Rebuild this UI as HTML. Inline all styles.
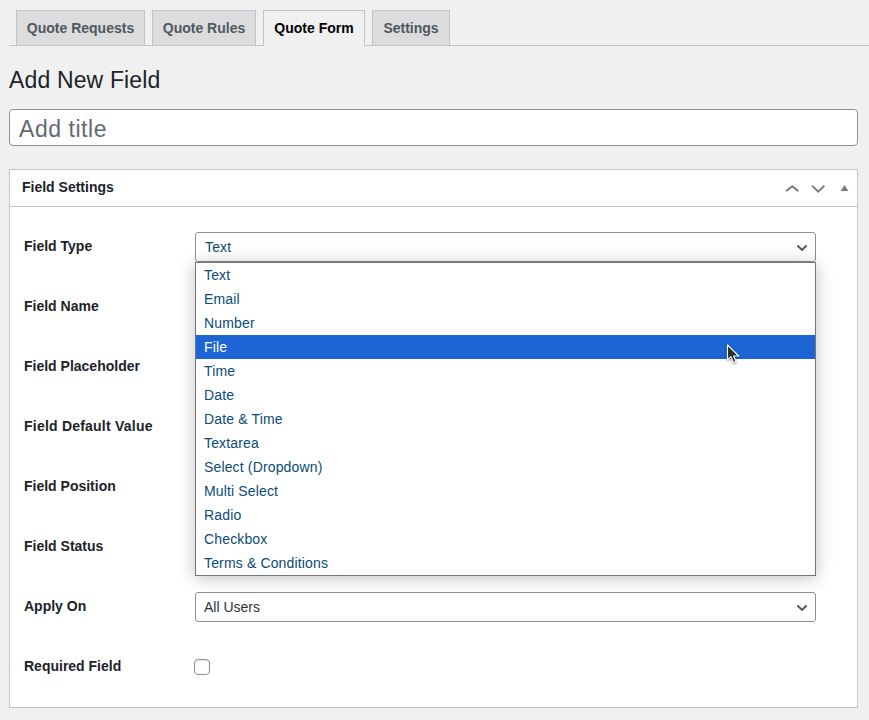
<!DOCTYPE html>
<html><head><meta charset="utf-8">
<style>
html,body{margin:0;padding:0;}
body{width:869px;height:720px;overflow:hidden;background:#f0f0f1;position:relative;font-family:"Liberation Sans",sans-serif;color:#1d2327;}
.a{position:absolute;white-space:nowrap;line-height:1;}
.tabline{position:absolute;left:9px;top:45px;width:860px;height:1px;background:#c3c4c7;}
.tab{position:absolute;top:10px;height:35px;box-sizing:border-box;border:1px solid #c3c4c7;border-bottom:none;background:#dcdcde;color:#50575e;font-weight:bold;font-size:14px;}
.tab.act{background:#f0f0f1;color:#000;height:36px;}
.tab span{position:absolute;top:10px;left:0;right:0;text-align:center;line-height:1;}
h1{position:absolute;margin:0;left:9px;top:69px;font-size:23px;letter-spacing:0.15px;font-weight:normal;line-height:1;}
.title{position:absolute;left:9px;top:109px;width:849px;height:37px;box-sizing:border-box;border:1px solid #8c8f94;border-radius:4px;background:#fff;}
.title span{position:absolute;left:9px;top:8px;font-size:23px;letter-spacing:0.55px;color:#646970;line-height:1;}
.box{position:absolute;left:9px;top:169px;width:849px;height:539px;box-sizing:border-box;border:1px solid #c3c4c7;background:#fff;}
.hdr{position:absolute;left:0;top:0;right:0;height:36px;border-bottom:1px solid #c3c4c7;}
.lbl{position:absolute;left:24px;font-weight:bold;font-size:14px;color:#1d2327;}
.sel{position:absolute;left:195px;width:621px;height:30px;box-sizing:border-box;border:1px solid #8c8f94;border-radius:3px;background:#fff;color:#2c3338;font-size:14px;letter-spacing:0.15px;}
.sel span{position:absolute;left:9px;top:7px;line-height:1;}
.pop{position:absolute;left:195px;top:262px;width:621px;height:314px;box-sizing:border-box;border:1px solid #767676;background:#fff;box-shadow:0 2px 16px rgba(0,0,0,.25);}
.opt{position:absolute;left:0;right:0;height:24px;font-size:14px;color:#0a4b78;letter-spacing:0.15px;}
.opt span{position:absolute;left:8px;top:5px;line-height:1;}
.opt.hi{background:#1d65d4;color:#fff;}
.cb{position:absolute;left:194px;top:659px;width:16px;height:16px;box-sizing:border-box;border:1px solid #8c8f94;border-radius:4px;background:#fff;box-shadow:inset 0 1px 2px rgba(0,0,0,.1);}
</style></head><body>
<div class="tabline"></div>
<div class="tab" style="left:16px;width:129px;"><span>Quote Requests</span></div>
<div class="tab" style="left:152px;width:104px;"><span>Quote Rules</span></div>
<div class="tab act" style="left:263px;width:102px;"><span>Quote Form</span></div>
<div class="tab" style="left:372px;width:78px;"><span>Settings</span></div>

<h1>Add New Field</h1>
<div class="title"><span>Add title</span></div>

<div class="box">
  <div class="hdr">
    <span class="a" style="left:12px;top:10px;font-size:14px;font-weight:bold;">Field Settings</span>
  </div>
</div>

<span class="a lbl" style="top:239px;">Field Type</span>
<span class="a lbl" style="top:299px;">Field Name</span>
<span class="a lbl" style="top:359px;">Field Placeholder</span>
<span class="a lbl" style="top:419px;letter-spacing:0.22px;">Field Default Value</span>
<span class="a lbl" style="top:479px;">Field Position</span>
<span class="a lbl" style="top:539px;">Field Status</span>
<span class="a lbl" style="top:599px;">Apply On</span>
<span class="a lbl" style="top:659px;">Required Field</span>

<div class="sel" style="top:232px;color:#0a4b78;"><span>Text</span>
</div>
<div class="sel" style="top:592px;"><span style="left:8px;letter-spacing:0;">All Users</span>
</div>
<div class="cb"></div>

<div class="pop">
  <div class="opt" style="top:0px;"><span>Text</span></div>
  <div class="opt" style="top:24px;"><span>Email</span></div>
  <div class="opt" style="top:48px;"><span>Number</span></div>
  <div class="opt hi" style="top:72px;"><span>File</span></div>
  <div class="opt" style="top:96px;"><span>Time</span></div>
  <div class="opt" style="top:120px;"><span>Date</span></div>
  <div class="opt" style="top:144px;"><span>Date &amp; Time</span></div>
  <div class="opt" style="top:168px;"><span>Textarea</span></div>
  <div class="opt" style="top:192px;"><span>Select (Dropdown)</span></div>
  <div class="opt" style="top:216px;"><span>Multi Select</span></div>
  <div class="opt" style="top:240px;"><span>Radio</span></div>
  <div class="opt" style="top:264px;"><span>Checkbox</span></div>
  <div class="opt" style="top:288px;"><span>Terms &amp; Conditions</span></div>
</div>

<svg style="position:absolute;left:0;top:0" width="869" height="720" viewBox="0 0 869 720">
  <path d="M786.1 191.1 L792.2 186.2 L798.3 191.1" fill="none" stroke="#787c82" stroke-width="2"/>
  <path d="M812 185.6 L818.2 191.6 L824.4 185.6" fill="none" stroke="#787c82" stroke-width="2"/>
  <path d="M840.6 191 L844.5 185 L848.4 191 Z" fill="#787c82"/>
  <path d="M797.4 245.6 L802 249.9 L806.6 245.6" fill="none" stroke="#50575e" stroke-width="2"/>
  <path d="M797.4 605.6 L802 609.9 L806.6 605.6" fill="none" stroke="#50575e" stroke-width="2"/>
  </svg>
<svg style="position:absolute;left:717px;top:335px;filter:drop-shadow(0 1px 1.2px rgba(0,0,0,.45))" width="40" height="40" viewBox="0 0 40 40">
  <g transform="translate(10.5,9.8)">
    <path d="M0 0 L0 14.8 L3.4 11.8 L6 17.6 L8.6 16.6 L6.1 11.2 L11.2 11.2 Z" fill="#2e2e2e" stroke="#fff" stroke-width="1.1" stroke-linejoin="round"/>
  </g>
</svg>
</body></html>
